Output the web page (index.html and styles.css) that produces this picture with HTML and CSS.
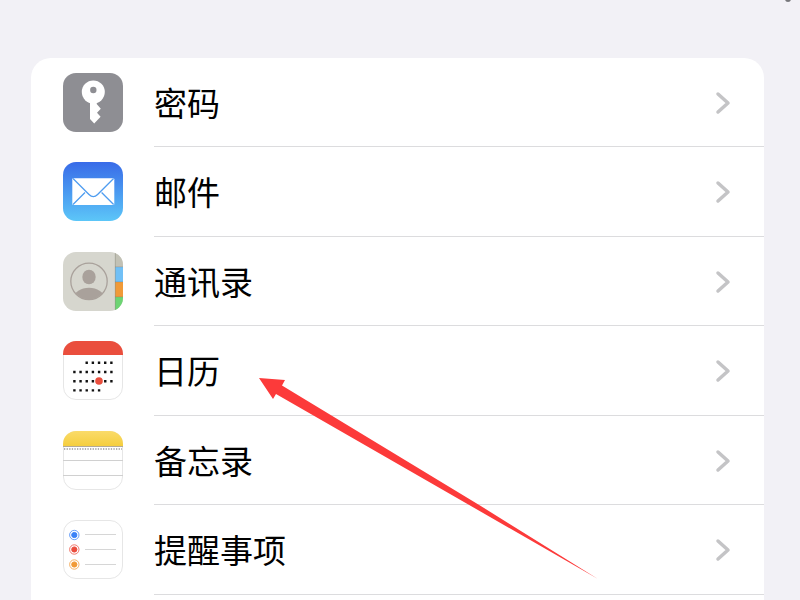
FILE: index.html
```html
<!DOCTYPE html>
<html lang="zh-CN">
<head>
    <meta charset="UTF-8">
    <meta name="viewport" content="width=device-width, initial-scale=1.0">
    <title>设置</title>
    <link rel="stylesheet" href="styles.css">
</head>
<body>
    <span class="dot"></span>

    <ul class="list">
        <li>
            <a class="row" href="#passwords">
                <svg class="icon" viewBox="0 0 60 59" aria-hidden="true">
                    <rect width="60" height="59" rx="13" fill="#8e8e93"/>
                    <circle cx="30.3" cy="19" r="11.5" fill="#fff"/>
                    <path d="M27 28V46L31.2 50.5L37.6 43.7L34 39.7L37.8 35.7L33.7 31V28Z" fill="#fff"/>
                    <circle cx="30.3" cy="17" r="3.2" fill="#8e8e93"/>
                </svg>
                <span class="name">密码</span>
                <svg class="chevron" viewBox="0 0 16 24" aria-hidden="true"><path d="M3 3L13 12L3 21"/></svg>
            </a>
        </li>
        <li>
            <a class="row" href="#mail">
                <svg class="icon" viewBox="0 0 60 59" aria-hidden="true">
                    <defs>
                        <linearGradient id="sky" x1="0" y1="0" x2="0" y2="1">
                            <stop offset="0" stop-color="#386be8"/>
                            <stop offset="1" stop-color="#5cc6f8"/>
                        </linearGradient>
                    </defs>
                    <rect width="60" height="59" rx="13" fill="url(#sky)"/>
                    <rect x="9.3" y="16.2" width="42" height="26.8" rx="1" fill="#fff"/>
                    <path d="M10 16.5L26 32.5Q30.3 36.8 34.6 32.5L50.6 16.5M10 42.5L22 30.5M50.6 42.5L38.6 30.5" fill="none" stroke="#4f9df0" stroke-width="1.3"/>
                </svg>
                <span class="name">邮件</span>
                <svg class="chevron" viewBox="0 0 16 24" aria-hidden="true"><path d="M3 3L13 12L3 21"/></svg>
            </a>
        </li>
        <li>
            <a class="row" href="#contacts">
                <svg class="icon" viewBox="0 0 60 59" aria-hidden="true">
                    <defs>
                        <clipPath id="tile"><rect width="60" height="59" rx="13"/></clipPath>
                        <clipPath id="face"><circle cx="26" cy="29.3" r="18"/></clipPath>
                    </defs>
                    <g clip-path="url(#tile)">
                        <rect width="60" height="59" fill="#d6d6ce"/>
                        <rect x="52" width="8" height="15" fill="#c2c1b5"/>
                        <rect x="52" y="15" width="8" height="15" fill="#71c0f6"/>
                        <rect x="52" y="30" width="8" height="15" fill="#f09a38"/>
                        <rect x="52" y="45" width="8" height="14" fill="#6dd473"/>
                        <path d="M52.3 0V59" stroke="#8d8d80" stroke-opacity=".5"/>
                        <path d="M52 14.8H60M52 29.8H60M52 44.8H60" stroke="#777" stroke-opacity=".3"/>
                    </g>
                    <circle cx="26" cy="29.3" r="18.2" fill="none" stroke="#a9a19b" stroke-width="1.3"/>
                    <g clip-path="url(#face)" fill="#a9a19b">
                        <ellipse cx="26" cy="25" rx="6.7" ry="7.3"/>
                        <ellipse cx="26" cy="46" rx="15" ry="10.3"/>
                    </g>
                </svg>
                <span class="name">通讯录</span>
                <svg class="chevron" viewBox="0 0 16 24" aria-hidden="true"><path d="M3 3L13 12L3 21"/></svg>
            </a>
        </li>
        <li>
            <a class="row" href="#calendar">
                <svg class="icon" viewBox="0 0 60 59" aria-hidden="true">
                    <rect x=".5" y=".5" width="59" height="58" rx="12.5" fill="#fff" stroke="#e6e6e6"/>
                    <path d="M0 14V13A13 13 0 0 1 13 0H47A13 13 0 0 1 60 13V14Z" fill="#ea4e3d"/>
                    <g stroke="#111" stroke-width="2.4" stroke-dasharray="2.4 3.77">
                        <path d="M22.5 21.7H50"/>
                        <path d="M10.2 31H50"/>
                        <path d="M10.2 40.2H50"/>
                        <path d="M10.2 49.4H38"/>
                    </g>
                    <circle cx="36" cy="40" r="3.8" fill="#ea4e3d"/>
                </svg>
                <span class="name">日历</span>
                <svg class="chevron" viewBox="0 0 16 24" aria-hidden="true"><path d="M3 3L13 12L3 21"/></svg>
            </a>
        </li>
        <li>
            <a class="row" href="#notes">
                <svg class="icon" viewBox="0 0 60 59" aria-hidden="true">
                    <defs>
                        <linearGradient id="pad" x1="0" y1="0" x2="0" y2="1">
                            <stop offset="0" stop-color="#fadb6a"/>
                            <stop offset="1" stop-color="#f5ce3e"/>
                        </linearGradient>
                    </defs>
                    <rect x=".5" y=".5" width="59" height="58" rx="12.5" fill="#fff" stroke="#e6e6e6"/>
                    <path d="M0 15V13A13 13 0 0 1 13 0H47A13 13 0 0 1 60 13V15Z" fill="url(#pad)"/>
                    <path d="M0 15.5H60" stroke="#b3aa98"/>
                    <path d="M1 18H59" stroke="#999" stroke-width="1.3" stroke-dasharray="1.3 1.3"/>
                    <path d="M0 29.5H60M0 44.5H60" stroke="#d0d0d0"/>
                </svg>
                <span class="name">备忘录</span>
                <svg class="chevron" viewBox="0 0 16 24" aria-hidden="true"><path d="M3 3L13 12L3 21"/></svg>
            </a>
        </li>
        <li>
            <a class="row" href="#reminders">
                <svg class="icon" viewBox="0 0 60 59" aria-hidden="true">
                    <rect x=".5" y=".5" width="59" height="58" rx="12.5" fill="#fff" stroke="#e6e6e6"/>
                    <g fill="#3b82f7" stroke="#3b82f7">
                        <circle cx="11.3" cy="15" r="2.6"/>
                        <circle cx="11.3" cy="15" r="4.7" fill="none" stroke-opacity=".75"/>
                    </g>
                    <g fill="#eb4d3d" stroke="#eb4d3d">
                        <circle cx="11.3" cy="29.5" r="2.6"/>
                        <circle cx="11.3" cy="29.5" r="4.7" fill="none" stroke-opacity=".75"/>
                    </g>
                    <g fill="#f19a37" stroke="#f19a37">
                        <circle cx="11.3" cy="44.5" r="2.6"/>
                        <circle cx="11.3" cy="44.5" r="4.7" fill="none" stroke-opacity=".75"/>
                    </g>
                    <path d="M22 14.5H53M22 29.5H53M22 44.5H53" stroke="#d6d6d6"/>
                </svg>
                <span class="name">提醒事项</span>
                <svg class="chevron" viewBox="0 0 16 24" aria-hidden="true"><path d="M3 3L13 12L3 21"/></svg>
            </a>
        </li>
    </ul>

    <!-- arrow pointing at the calendar row -->
    <svg class="arrow" viewBox="0 0 340 202" aria-hidden="true">
        <path d="M0 0L26 2L23 7.5L221 127.5L339 201L17 16L14 21Z" fill="#fc3a3a"/>
    </svg>
</body>
</html>
```

FILE: styles.css
```css
* {
    box-sizing: border-box;
}
body {
    margin: 0;
    height: 100vh;
    padding: 58px 36px 0 31px;
    overflow: hidden;
    position: relative;
    background: #f2f1f6;
    font-family: "Noto Sans CJK SC", sans-serif;
}
.list {
    margin: 0;
    padding: 0 0 40px;
    list-style: none;
    background: #fff;
    border-radius: 20px;
}
.row {
    display: flex;
    align-items: flex-start;
    height: 89px;
    padding: 15px 33px 0 32px;
    color: #000;
    text-decoration: none;
    background: linear-gradient(#dcdcde, #dcdcde) no-repeat 123px 100%;
    background-size: 100% 1px;
}
li:nth-child(even) .row {
    height: 90px;
}
.icon {
    flex: none;
    width: 60px;
    height: 59px;
}
.name {
    flex: 1;
    margin-left: 31px;
    font-size: 33px;
    line-height: 58px;
}
.chevron {
    flex: none;
    width: 16px;
    height: 24px;
    margin-top: 18px;
    fill: none;
    stroke: #c4c4c6;
    stroke-width: 3.5;
    stroke-linecap: round;
    stroke-linejoin: round;
}
.arrow {
    position: absolute;
    left: 259px;
    top: 378px;
    width: 340px;
    height: 202px;
    pointer-events: none;
}
.dot {
    position: absolute;
    top: -4px;
    right: 9px;
    width: 6px;
    height: 6px;
    border-radius: 50%;
    background: #77777b;
}
```
